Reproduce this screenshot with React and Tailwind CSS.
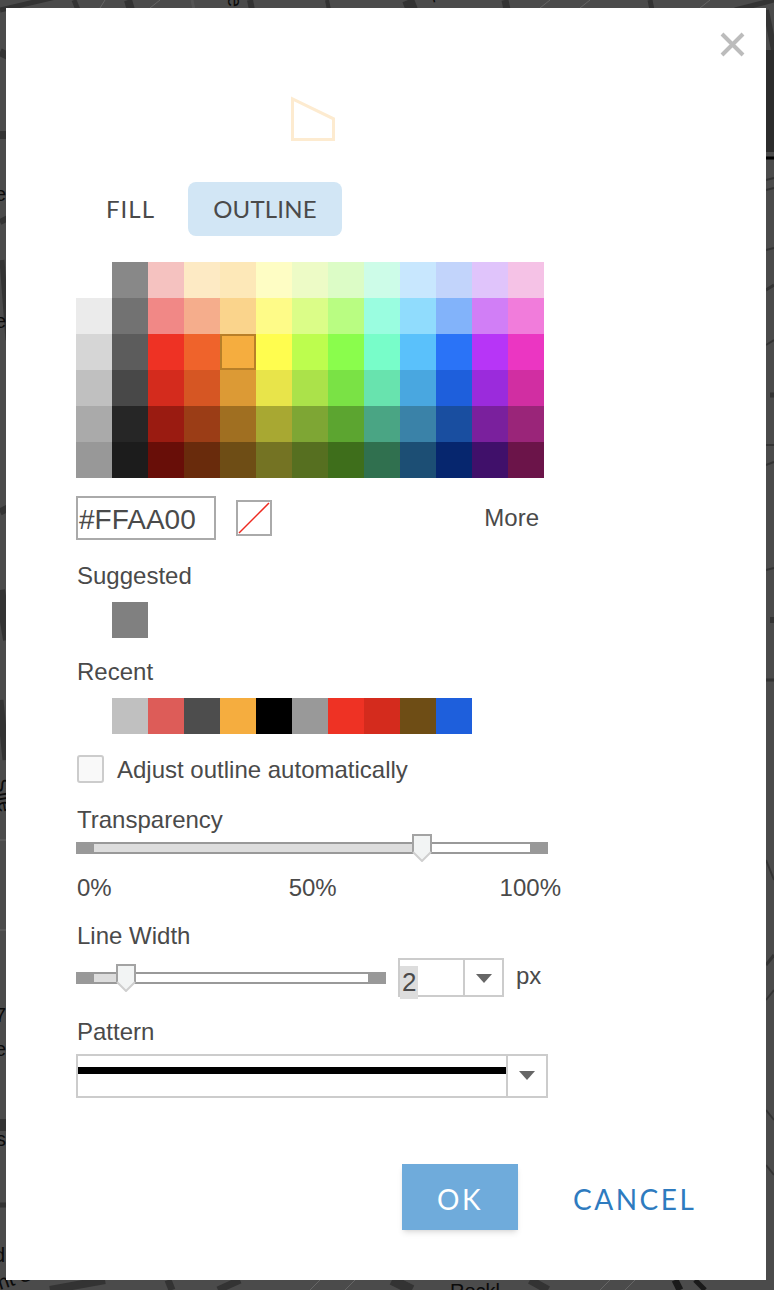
import React from "react";

const PALETTE = [
  ["#ffffff", "#888888", "#f5c2c0", "#fdeac4", "#fde8b8", "#fefdc4", "#edfbc6", "#dcfcc6", "#cdfce8", "#c8e7fe", "#c2d4fb", "#e0c4fb", "#f5c2e6"],
  ["#ebebeb", "#727272", "#f18886", "#f5ad8c", "#fad48c", "#fefb88", "#dbfd88", "#b9fd82", "#9afde0", "#90dcfd", "#82b3fa", "#d17ef6", "#f17cdb"],
  ["#d6d6d6", "#5c5c5c", "#ee3224", "#ef632b", "#f5ad3f", "#fffd4f", "#bdfd4e", "#8afd4c", "#78fdc9", "#5ac1fb", "#2a73f7", "#b735f7", "#eb36c2"],
  ["#c0c0c0", "#484848", "#d42b1d", "#d65623", "#dc9a35", "#e8e44a", "#abe24a", "#7ae245", "#68e3ae", "#49a7e0", "#1e5fdc", "#9b2bdc", "#d12ea2"],
  ["#aaaaaa", "#262626", "#9a1b11", "#9b3d16", "#a06f21", "#a8a832", "#7ea634", "#5ca530", "#4aa584", "#3a82a8", "#194ea0", "#7a209d", "#9a2579"],
  ["#989898", "#1c1c1c", "#680e08", "#692b0c", "#6e4d15", "#747323", "#566f20", "#3e6e1b", "#30704f", "#1c4e74", "#06266e", "#40106a", "#6b1449"],
];

const RECENT = ["#c0c0c0", "#dd5c58", "#4d4d4d", "#f5ad3f", "#000000", "#999999", "#ee3224", "#d42b1d", "#6e4d15", "#1e5fdc"];

// [x1, y1, x2, y2, width, colour] for the map that shows round the dialog
const ROADS = [
  [0, 10, 60, -4, 5, "#333"], [74, 0, 78, 10, 5, "#333"], [128, 0, 131, 10, 8, "#333"], [192, 0, 194, 10, 3, "#555"],
  [250, 0, 252, 10, 6, "#333"], [327, 0, 329, 10, 4, "#333"], [408, 0, 412, 10, 12, "#333"], [505, 0, 507, 10, 7, "#333"],
  [650, 0, 652, 10, 5, "#333"], [735, 10, 774, 0, 5, "#333"],
  [0, 52, 8, 56, 8, "#333"], [0, 135, 8, 135, 8, "#333"], [0, 222, 8, 218, 6, "#333"], [2, 260, 8, 340, 5, "#333"],
  [0, 512, 8, 508, 7, "#333"], [0, 590, 8, 640, 10, "#333"], [0, 840, 8, 840, 1, "#666"], [0, 930, 8, 930, 1, "#666"],
  [0, 1125, 8, 1125, 12, "#333"], [0, 1205, 8, 1205, 5, "#333"], [0, 700, 6, 760, 7, "#333"],
  [766, 10, 774, 50, 6, "#333"], [770, 50, 770, 152, 8, "#2c2c2c"], [766, 158, 774, 158, 3, "#000"],
  [766, 180, 774, 178, 2, "#333"], [766, 190, 774, 188, 2, "#333"], [766, 250, 774, 248, 2, "#333"],
  [766, 290, 774, 285, 3, "#333"], [766, 345, 774, 340, 2, "#333"], [770, 395, 774, 395, 5, "#333"],
  [766, 445, 774, 445, 2, "#333"], [766, 465, 774, 462, 2, "#333"], [766, 570, 774, 568, 2, "#333"],
  [770, 620, 774, 620, 6, "#333"], [766, 680, 774, 680, 3, "#333"], [766, 860, 774, 880, 2, "#333"],
  [766, 965, 774, 955, 3, "#333"], [766, 1000, 774, 990, 2, "#333"], [766, 1110, 774, 1120, 2, "#333"], [766, 1165, 774, 1175, 2, "#333"],
  [50, 1290, 105, 1280, 8, "#333"], [168, 1280, 172, 1290, 7, "#333"], [218, 1290, 240, 1280, 7, "#333"],
  [392, 1280, 412, 1290, 10, "#333"], [530, 1280, 548, 1290, 8, "#333"], [675, 1280, 680, 1290, 7, "#1a1a1a"], [695, 1280, 705, 1290, 5, "#1a1a1a"],
  [310, 1290, 320, 1280, 1, "#666"], [345, 1290, 355, 1280, 1, "#666"], [600, 1290, 610, 1280, 1, "#666"], [625, 1290, 635, 1280, 1, "#666"],
  [100, 8, 105, 0, 1, "#666"], [150, 8, 160, 0, 1, "#666"], [540, 8, 550, 0, 1, "#666"], [580, 8, 590, 0, 1, "#666"], [700, 8, 710, 0, 1, "#666"],
];

const MapBackdrop = () => (
  <svg className="absolute inset-0" width="774" height="1290" viewBox="0 0 774 1290">
    {ROADS.map(([x1, y1, x2, y2, width, colour], i) => (
      <line key={i} x1={x1} y1={y1} x2={x2} y2={y2} stroke={colour} strokeWidth={width} />
    ))}
    <g fontFamily="'Liberation Sans', sans-serif" fontSize="20" fill="#0a0a0a">
      <text x="-5" y="201">e</text>
      <text x="-5" y="328">e</text>
      <text x="-5" y="1022">7</text>
      <text x="-5" y="1056">e</text>
      <text x="-4" y="1146">s</text>
      <text x="-6" y="1262">d</text>
      <text x="0" y="1290" transform="rotate(-18 0 1290)">nt St</text>
      <text x="450" y="1298">Rockl</text>
      <text x="-6" y="780" transform="rotate(80 -6 780)">Sile</text>
      <text x="228" y="-4" transform="rotate(90 228 -4)">e</text>
      <text x="424" y="-4" transform="rotate(90 424 -4)">r</text>
    </g>
  </svg>
);

const Swatch = ({ colour }) => <div className="w-9 h-9" style={{ backgroundColor: colour }} />;

const DropArrow = () => (
  <svg width="20" height="12" viewBox="0 0 20 12" className="blur-[0.6px]">
    <polygon points="2,2 18,2 10,11" fill="#666666" />
  </svg>
);

const Thumb = () => (
  <svg width="20" height="28" viewBox="0 0 20 28">
    <path d="M1 1H19V18L10 27L1 18Z" fill="#f2f4f4" />
    <path d="M1 18V1H19V18" fill="none" stroke="#a3a3a3" strokeWidth="2" />
    <path d="M1 18L10 27L19 18" fill="none" stroke="#cfcfcf" strokeWidth="2" />
  </svg>
);

const Label = ({ children, className = "" }) => (
  <div className={`h-7 leading-7 ${className}`}>{children}</div>
);

const App = () => {
  return (
    <div className="relative w-[774px] h-[1290px] overflow-hidden bg-[#4b4b4b] font-['Liberation_Sans',sans-serif] text-2xl text-[#4a4a4a]">
      <MapBackdrop />

      <div className="relative mt-2 ml-[6px] w-[760px] h-[1272px] bg-white">
        {/* Close */}
        <div className="flex justify-end pt-6 pr-[21px]">
          <svg width="25" height="25" viewBox="0 0 25 25">
            <path d="M2 2L23 23M23 2L2 23" stroke="#bcbcbc" strokeWidth="4" />
          </svg>
        </div>

        {/* Shape preview */}
        <div className="mt-[39px] ml-[285px] h-[45px]">
          <svg width="44" height="45" viewBox="0 0 44 45">
            <path d="M1.5 3V43.5H42.5V22.8Z" fill="none" stroke="#fdebd0" strokeWidth="3" />
          </svg>
        </div>

        {/* Tabs */}
        <div className="flex gap-2 mt-[41px] ml-[75px] h-[54px] font-['Lato',sans-serif]">
          <div className="flex items-center justify-center w-[99px] rounded-lg tracking-[1px]">FILL</div>
          <div className="flex items-center justify-center w-[154px] rounded-lg bg-[#d2e6f5] tracking-[0.2px]">OUTLINE</div>
        </div>

        <div className="ml-[70px]">
          {/* Palette */}
          <div className="grid grid-cols-[repeat(13,36px)] mt-[26px] w-[468px]">
            {PALETTE.flat().map((colour, i) =>
              colour === "#f5ad3f" ? (
                <div key={i} className="w-9 h-9 border-2 border-[#b87f28]" style={{ backgroundColor: colour }} />
              ) : (
                <Swatch key={i} colour={colour} />
              )
            )}
          </div>

          {/* Hex value */}
          <div className="flex items-center mt-[18px] w-[468px] h-11">
            <div className="flex items-center w-[140px] h-11 pl-[1px] pt-1 border-2 border-[#aaaaaa] text-[28px]">
              #FFAA00
            </div>
            <div className="ml-5 w-9 h-9 border-2 border-[#aaaaaa]">
              <svg width="32" height="32" viewBox="0 0 32 32" className="block">
                <line x1="1" y1="31" x2="31" y2="1" stroke="#ee2a20" strokeWidth="1.5" />
              </svg>
            </div>
            <div className="ml-auto mr-[5px]">More</div>
          </div>

          <Label className="mt-[22px] pl-px">Suggested</Label>
          <div className="mt-3 ml-9">
            <Swatch colour="#808080" />
          </div>

          <Label className="mt-5 pl-px">Recent</Label>
          <div className="flex mt-3 ml-9">
            {RECENT.map((colour, i) => (
              <Swatch key={i} colour={colour} />
            ))}
          </div>

          <div className="flex items-center mt-[21px] h-7 pl-px">
            <div className="w-[27px] h-7 rounded-[3px] border-2 border-[#cccccc] bg-[#f9f9f9]" />
            <div className="ml-[13px] pt-[2px]">Adjust outline automatically</div>
          </div>

          {/* Transparency */}
          <Label className="mt-[23px] pl-px">Transparency</Label>
          <div className="relative flex w-[472px] h-7 pt-2">
            <div className="w-[18px] h-3 bg-[#999999]" />
            <div className="flex-1 h-3 border-y-2 border-[#999999] bg-white">
              <div className="w-[319px] h-2 bg-[#dddddd]" />
            </div>
            <div className="w-[18px] h-3 bg-[#999999]" />
            <div className="absolute top-0 left-[336px]">
              <Thumb />
            </div>
          </div>
          <div className="flex justify-between mt-3 w-[485px] h-7 leading-7 pl-px">
            <span>0%</span>
            <span className="ml-[14px]">50%</span>
            <span>100%</span>
          </div>

          {/* Line width */}
          <Label className="mt-5 pl-px">Line Width</Label>
          <div className="flex mt-2 h-[39px]">
            <div className="relative flex w-[310px] h-7 mt-[6px] pt-2">
              <div className="w-[18px] h-3 bg-[#999999]" />
              <div className="flex-1 h-3 border-y-2 border-[#999999] bg-white">
                <div className="w-[22px] h-2 bg-[#dddddd]" />
              </div>
              <div className="w-[18px] h-3 bg-[#999999]" />
              <div className="absolute top-0 left-10">
                <Thumb />
              </div>
            </div>
            <div className="flex ml-3 w-[106px] h-[39px] border-2 border-[#cccccc]">
              <div className="w-[65px] border-r-2 border-[#cccccc]">
                <div className="w-[18px] h-[33px] mt-[6px] bg-[#dddddd] pl-[2px] text-[26px] leading-[33px]">2</div>
              </div>
              <div className="flex flex-1 items-center justify-center">
                <DropArrow />
              </div>
            </div>
            <div className="ml-3 leading-[36px]">px</div>
          </div>

          {/* Pattern */}
          <Label className="mt-[21px] pl-px">Pattern</Label>
          <div className="flex mt-2 w-[472px] h-11 border-2 border-[#cccccc]">
            <div className="w-[430px] border-r-2 border-[#cccccc]">
              <div className="w-[428px] h-[7px] mt-[11px] bg-black" />
            </div>
            <div className="flex flex-1 items-center justify-center pb-[2px]">
              <DropArrow />
            </div>
          </div>
        </div>

        {/* Actions */}
        <div className="flex items-center mt-[66px] ml-[396px] font-['Lato',sans-serif] text-[28px] tracking-[2.5px]">
          <div className="flex items-center justify-center w-[116px] h-[66px] pt-[6px] bg-[#6fabdb] text-white shadow-md">OK</div>
          <div className="ml-[55px] pt-[6px] text-[#2e7bbf]">CANCEL</div>
        </div>
      </div>
    </div>
  );
};

export default App;
